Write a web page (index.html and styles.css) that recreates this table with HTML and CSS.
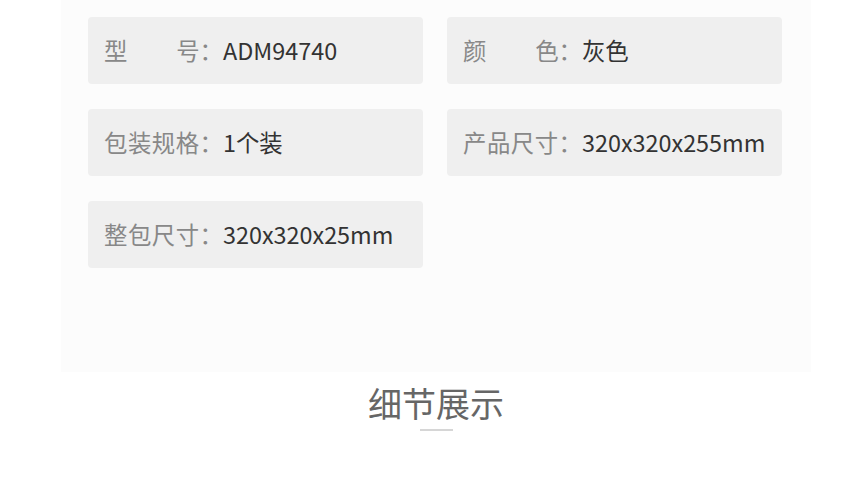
FILE: index.html
```html
<!DOCTYPE html>
<html lang="zh-CN">
<head>
    <meta charset="UTF-8">
    <meta name="viewport" content="width=device-width, initial-scale=1.0">
    <title>产品参数</title>
    <link rel="stylesheet" href="styles.css">
</head>
<body>
    <div class="page">
        <div class="params">
            <div class="param"><span class="label label-wide"><span>型</span><span>号</span></span><span class="colon">：</span><span class="value">ADM94740</span></div>
            <div class="param"><span class="label label-wide"><span>颜</span><span>色</span></span><span class="colon">：</span><span class="value">灰色</span></div>
            <div class="param"><span class="label">包装规格</span><span class="colon">：</span><span class="value">1个装</span></div>
            <div class="param"><span class="label">产品尺寸</span><span class="colon">：</span><span class="value">320x320x255mm</span></div>
            <div class="param"><span class="label">整包尺寸</span><span class="colon">：</span><span class="value">320x320x25mm</span></div>
        </div>

        <div class="section-title">
            <h2>细节展示</h2>
            <div class="title-line"></div>
        </div>
    </div>
</body>
</html>
```

FILE: styles.css
```css
body {
    margin: 0;
    background: #fff;
    font-family: "Noto Sans CJK SC", "Noto Sans", sans-serif;
}
.page { width: 750px; margin-left: 61px; }
.params {
    height: 372px;
    box-sizing: border-box;
    padding: 17px 0 0 27px;
    background: #fcfcfc;
    display: grid;
    grid-template-columns: 335px 335px;
    grid-auto-rows: 67px;
    column-gap: 24px;
    row-gap: 25px;
    align-content: start;
}
.param {
    background: #efefef;
    border-radius: 4px;
    display: flex;
    align-items: center;
    padding-left: 16px;
    font-size: 23.4px;
    line-height: 1;
}
.label { color: #888; letter-spacing: 0.5px; }
.label-wide {
    display: inline-flex;
    justify-content: space-between;
    width: calc(4em + 2px);
    letter-spacing: 0;
}
.colon { color: #888; }
.value { color: #333; }
.section-title { text-align: center; padding-top: 11px; }
.section-title h2 {
    margin: 0;
    font-size: 34px;
    font-weight: normal;
    line-height: 40px;
    color: #666;
}
.title-line {
    width: 33px;
    height: 2px;
    background: #d6d6d6;
    margin: 6px auto 0;
}
```
